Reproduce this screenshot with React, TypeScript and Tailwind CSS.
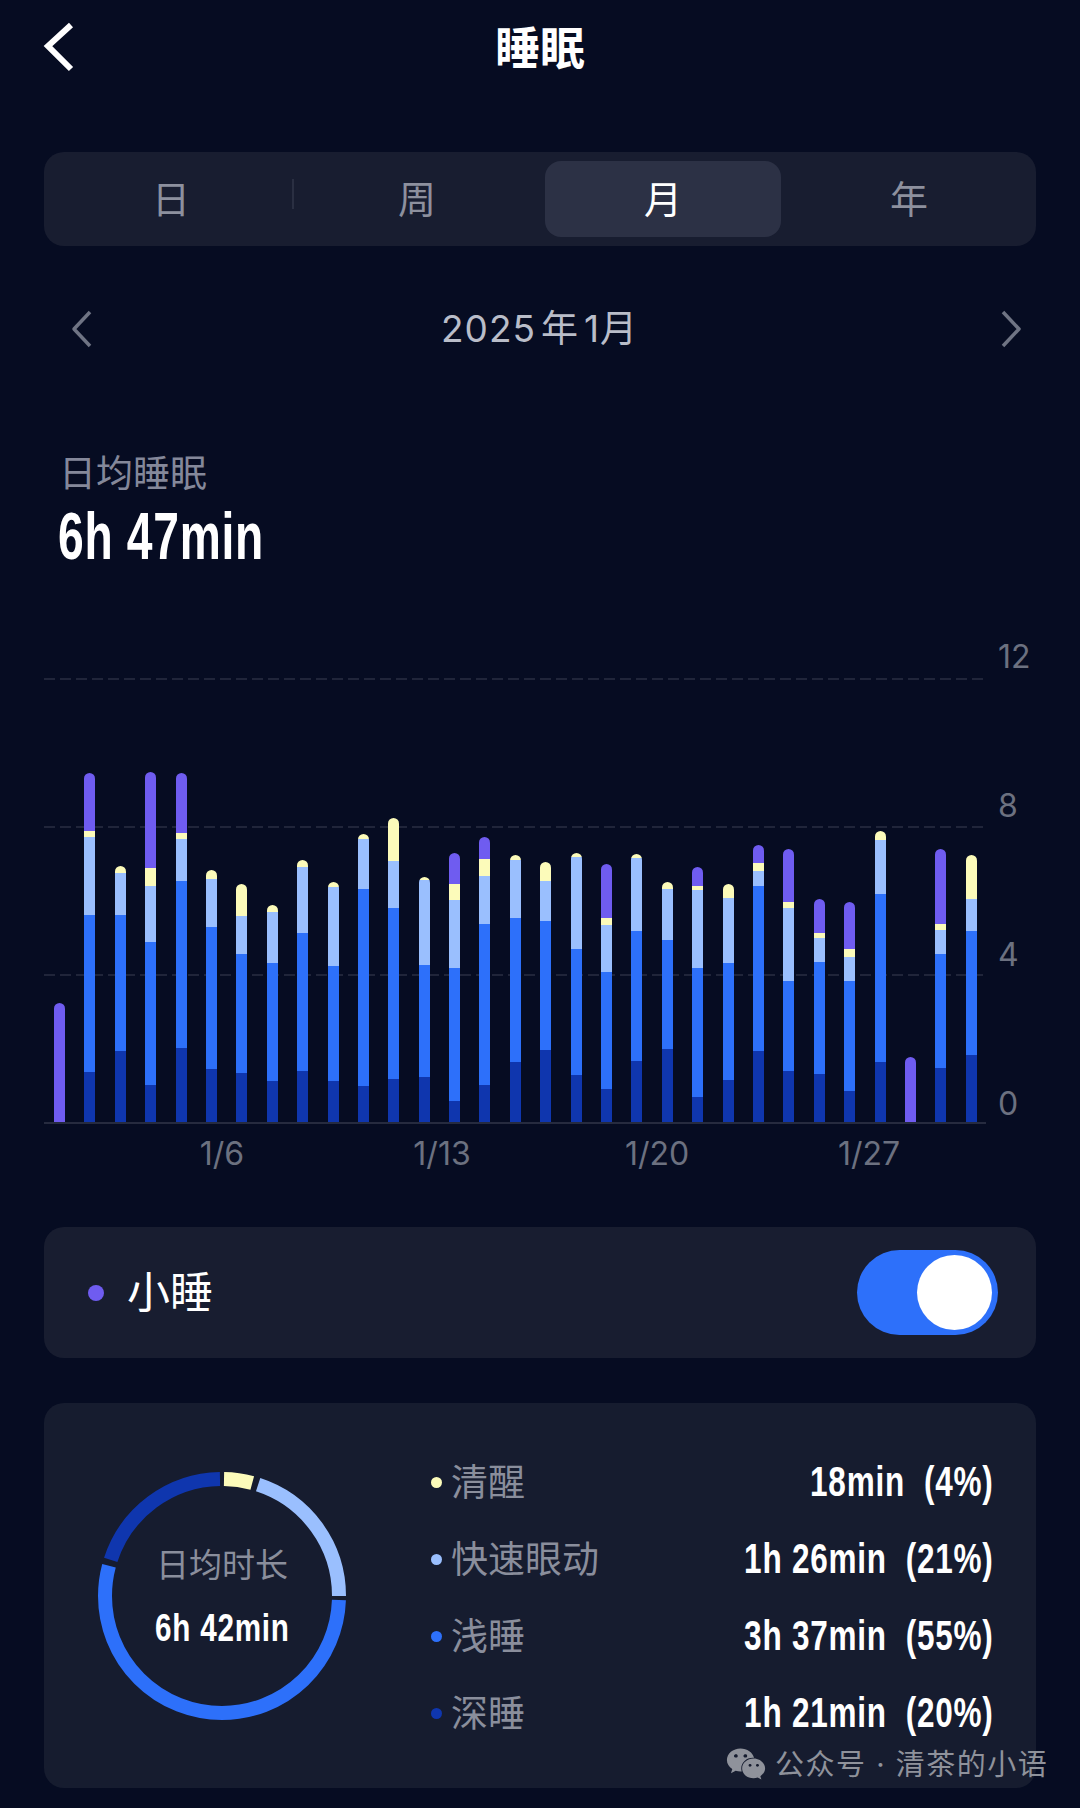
import { FaWeixin } from "react-icons/fa";

const CJK = "font-['Inter','Noto_Sans_CJK_SC',sans-serif]";
// the app uses a condensed number face, none is installed so bold Liberation gets squeezed
const NARROW = "font-['Liberation_Sans',sans-serif] font-bold inline-block whitespace-pre tracking-[1px]";
const DASH = "absolute inset-x-0 h-[2px] bg-[repeating-linear-gradient(90deg,#20253a_0_11px,transparent_11px_16px)]";

// stops read off the chart: top, end of nap, end of awake, end of rem, end of light. base is 1146, 3 units per px
const bars = [
  [790, 1146, 1146, 1146, 1146],
  [98, 272, 292, 525, 996],
  [378, 378, 400, 525, 934],
  [96, 385, 437, 606, 1036],
  [98, 278, 297, 423, 923],
  [391, 391, 416, 560, 988],
  [432, 432, 528, 642, 998],
  [495, 495, 516, 668, 1022],
  [361, 361, 381, 579, 993],
  [425, 425, 440, 677, 1022],
  [283, 283, 296, 447, 1039],
  [235, 235, 364, 504, 1017],
  [410, 410, 420, 675, 1012],
  [340, 431, 480, 684, 1084],
  [292, 358, 407, 552, 1036],
  [345, 345, 359, 534, 966],
  [365, 365, 423, 544, 931],
  [340, 340, 352, 627, 1005],
  [373, 533, 555, 697, 1047],
  [343, 343, 355, 574, 963],
  [425, 425, 447, 600, 926],
  [380, 439, 451, 684, 1071],
  [432, 432, 474, 669, 1020],
  [316, 369, 393, 437, 934],
  [328, 485, 503, 722, 993],
  [477, 578, 594, 665, 1001],
  [486, 628, 650, 722, 1053],
  [273, 273, 299, 461, 966],
  [951, 1146, 1146, 1146, 1146],
  [327, 552, 569, 641, 985],
  [346, 346, 477, 573, 945],
];

const stageColors = ["bg-[#6f5cf0]", "bg-[#fcfbba]", "bg-[#9abffe]", "bg-[#2d70fa]", "bg-[#0f36ae]"];

const legend = [
  { name: "清醒", value: "18min  (4%)", dot: "bg-[#fcfbba]" },
  { name: "快速眼动", value: "1h 26min  (21%)", dot: "bg-[#9abffe]" },
  { name: "浅睡", value: "3h 37min  (55%)", dot: "bg-[#2d70fa]" },
  { name: "深睡", value: "1h 21min  (20%)", dot: "bg-[#0f36ae]" },
];

const ring = [
  { color: "#fcfbba", from: 1, to: 15 },
  { color: "#9abffe", from: 18, to: 90 },
  { color: "#2d70fa", from: 92, to: 285 },
  { color: "#0f36ae", from: 288, to: 359 },
];

function Bar({ stops }: { stops: number[] }) {
  const edges = [...stops, 1146];
  return (
    <div className="flex w-[11px] flex-col overflow-hidden rounded-t-full">
      {stageColors.map((color, i) => (
        <div key={color} className={color} style={{ height: (edges[i + 1] - edges[i]) / 3 }} />
      ))}
    </div>
  );
}

function Chevron({ flip }: { flip?: boolean }) {
  return (
    <svg width="22" height="38" viewBox="0 0 22 38" className={flip ? "justify-self-end -scale-x-100" : ""}>
      <path d="M19 2 L3 19 L19 36" fill="none" stroke="#6f7484" strokeWidth="3.5" strokeLinejoin="round" />
    </svg>
  );
}

export default function App() {
  return (
    <div className={`relative flex h-[1808px] w-[1080px] flex-col overflow-hidden bg-[#060c22] ${CJK}`}>
      {/* header */}
      <div className="relative flex h-[96px] items-center justify-center">
        <svg width="32" height="52" viewBox="0 0 32 52" className="absolute left-[43px] top-[21px]">
          <path d="M28 4 L5 25 L28 48" fill="none" stroke="#ffffff" strokeWidth="6" strokeLinejoin="miter" />
        </svg>
        <span className="text-[45px] font-bold leading-none text-white">睡眠</span>
      </div>

      {/* period tabs */}
      <div className="mx-[44px] mt-[56px] grid h-[94px] grid-cols-4 items-center rounded-[20px] bg-[#181d30] px-[4px] text-[38px] text-[#8d909e]">
        <div className="relative flex h-[76px] items-center justify-center">
          日
          <span className="absolute right-0 top-[18px] h-[30px] w-[2px] bg-[#2a2f42]" />
        </div>
        <div className="flex h-[76px] items-center justify-center">周</div>
        <div className="mx-[5px] flex h-[76px] items-center justify-center rounded-[16px] bg-[#2c3145] text-white">月</div>
        <div className="flex h-[76px] items-center justify-center">年</div>
      </div>

      {/* month switcher */}
      <div className="mt-[60px] grid grid-cols-[1fr_auto_1fr] items-center pl-[71px] pr-[58px]">
        <Chevron />
        <span className="-ml-[14px] text-[37px] leading-[46px] tracking-[1px] text-[#b9bdc9]">
          2025<span className="mx-[5px]">年</span>1月
        </span>
        <Chevron flip />
      </div>

      {/* average */}
      <div className="mt-[100px] pl-[59px] text-[37px] leading-[44px] text-[#84889a]">日均睡眠</div>
      <div className="mt-[10px] pl-[58px] leading-[60px]">
        <span className={`origin-left scale-x-[0.7] text-[66px] text-white ${NARROW}`}>6h 47min</span>
      </div>

      {/* chart */}
      <div className="mt-[54px] flex items-end pl-[44px]">
        <div className="relative h-[446px] w-[942px]">
          <div className={`${DASH} top-0`} />
          <div className={`${DASH} top-[148px]`} />
          <div className={`${DASH} top-[296px]`} />
          <div className="relative flex h-[444px] items-end justify-between pl-[10px] pr-[9px]">
            {bars.map((stops, i) => (
              <Bar key={i} stops={stops} />
            ))}
          </div>
          <div className="h-[2px] bg-[#262b3f]" />
        </div>
        <div className="ml-[12px] flex h-[487px] flex-col justify-between text-[32px] leading-[40px] text-[#6c7180]">
          <span>12</span>
          <span>8</span>
          <span>4</span>
          <span>0</span>
        </div>
      </div>
      <div className="mt-[10px] flex pl-[162px] text-[32px] leading-[40px] text-[#6c7180]">
        <span className="w-[120px] text-center">1/6</span>
        <span className="ml-[100px] w-[120px] text-center">1/13</span>
        <span className="ml-[95px] w-[120px] text-center">1/20</span>
        <span className="ml-[92px] w-[120px] text-center">1/27</span>
      </div>

      {/* nap toggle */}
      <div className="mx-[44px] mt-[53px] flex h-[131px] items-center rounded-[20px] bg-[#181d30] pl-[44px] pr-[38px]">
        <span className="h-[16px] w-[16px] rounded-full bg-[#6f5cf0]" />
        <span className="ml-[23px] text-[43px] leading-none text-white">小睡</span>
        <div className="ml-auto flex h-[85px] w-[141px] items-center justify-end rounded-full bg-[#2d70fa] pr-[6px]">
          <span className="h-[75px] w-[75px] rounded-full bg-white" />
        </div>
      </div>

      {/* stage summary */}
      <div className="mx-[44px] mt-[45px] flex h-[385px] items-center rounded-[20px] bg-[#161c2f] pl-[54px] pr-[43px]">
        <div className="relative h-[248px] w-[248px] shrink-0">
          <svg width="248" height="248" viewBox="0 0 248 248" className="-rotate-90">
            {ring.map((s) => (
              <circle
                key={s.color}
                cx="124"
                cy="124"
                r="117"
                fill="none"
                stroke={s.color}
                strokeWidth="14"
                pathLength={360}
                strokeDasharray={`${s.to - s.from} ${360 - (s.to - s.from)}`}
                strokeDashoffset={-s.from}
              />
            ))}
          </svg>
          <div className="absolute inset-0 flex flex-col items-center">
            <span className="mt-[71px] text-[33px] leading-[44px] text-[#8a8e9c]">日均时长</span>
            <span className={`mt-[19px] scale-x-[0.78] text-[38px] leading-[44px] text-white ${NARROW}`}>6h 42min</span>
          </div>
        </div>
        <div className="ml-[85px] mt-[4px] flex flex-1 flex-col">
          {legend.map((row) => (
            <div key={row.name} className="flex h-[77px] items-center">
              <span className={`h-[11px] w-[11px] rounded-full ${row.dot}`} />
              <span className="ml-[9px] text-[37px] leading-none text-[#8a8e9c]">{row.name}</span>
              <span className={`ml-auto origin-right scale-x-[0.75] text-[42px] leading-none text-white ${NARROW}`}>{row.value}</span>
            </div>
          ))}
        </div>
      </div>

      {/* watermark */}
      <div className="absolute left-[726px] top-[1744px] flex h-[40px] items-center text-[#8f929b]">
        <FaWeixin className="h-[38px] w-[40px]" />
        <span className="ml-[9px] whitespace-nowrap text-[29px] leading-none tracking-[1.5px]">公众号 · 清茶的小语</span>
      </div>
    </div>
  );
}
